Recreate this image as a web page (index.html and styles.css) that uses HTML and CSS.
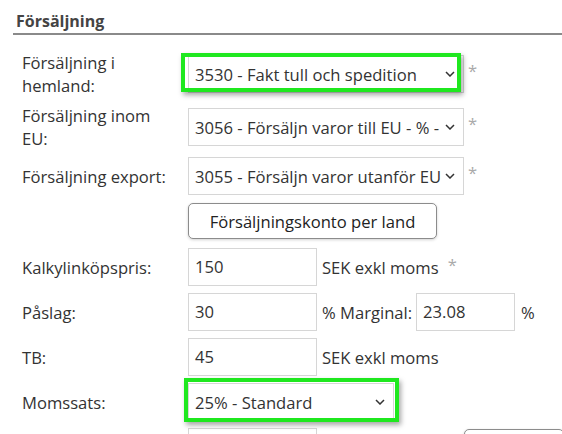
FILE: index.html
```html
<!DOCTYPE html>
<html lang="sv">
<head>
<meta charset="utf-8">
<link rel="stylesheet" href="styles.css">
</head>
<body>
<div class="section">
  <h2 class="heading">Försäljning</h2>
  <div class="form">
    <div class="row row-tall">
      <div class="label">Försäljning i<br>hemland:</div>
      <div class="field">
        <div class="select wide">
          <span class="val">3530 - Fakt tull och spedition</span>
          <svg class="chev" width="10" height="6" viewBox="0 0 10 6"><polyline points="1,1 5,5 9,1" fill="none" stroke="#333" stroke-width="1.5"/></svg>
          <div class="mark mark1"></div>
        </div>
        <span class="req">*</span>
      </div>
    </div>
    <div class="row row-tall">
      <div class="label">Försäljning inom<br>EU:</div>
      <div class="field">
        <div class="select wide">
          <span class="val">3056 - Försäljn varor till EU - % -</span>
          <svg class="chev" width="10" height="6" viewBox="0 0 10 6"><polyline points="1,1 5,5 9,1" fill="none" stroke="#333" stroke-width="1.5"/></svg>
        </div>
        <span class="req">*</span>
      </div>
    </div>
    <div class="row">
      <div class="label">Försäljning export:</div>
      <div class="field">
        <div class="select wide">
          <span class="val">3055 - Försäljn varor utanför EU</span>
          <svg class="chev" width="10" height="6" viewBox="0 0 10 6"><polyline points="1,1 5,5 9,1" fill="none" stroke="#333" stroke-width="1.5"/></svg>
        </div>
        <span class="req">*</span>
      </div>
    </div>
    <div class="row row-btn">
      <div class="label"></div>
      <div class="field">
        <button class="btn">Försäljningskonto per land</button>
      </div>
    </div>
    <div class="row">
      <div class="label">Kalkylinköpspris:</div>
      <div class="field">
        <div class="input">150</div>
        <span class="unit">SEK exkl moms</span>
        <span class="req req-unit">*</span>
      </div>
    </div>
    <div class="row">
      <div class="label">Påslag:</div>
      <div class="field">
        <div class="input">30</div>
        <span class="unit">% Marginal:</span>
        <div class="input small">23.08</div>
        <span class="unit pct">%</span>
      </div>
    </div>
    <div class="row">
      <div class="label">TB:</div>
      <div class="field">
        <div class="input">45</div>
        <span class="unit">SEK exkl moms</span>
      </div>
    </div>
    <div class="row">
      <div class="label">Momssats:</div>
      <div class="field">
        <div class="select narrow">
          <span class="val">25% - Standard</span>
          <svg class="chev" width="10" height="6" viewBox="0 0 10 6"><polyline points="1,1 5,5 9,1" fill="none" stroke="#333" stroke-width="1.5"/></svg>
          <div class="mark mark2"></div>
        </div>
      </div>
    </div>
    <div class="row">
      <div class="label">&nbsp;</div>
      <div class="field">
        <div class="input"></div>
        <div class="spacer"></div>
        <button class="btn btn-cut">&nbsp;</button>
      </div>
    </div>
  </div>
</div>
</body>
</html>
```
FILE: styles.css
```css
html, body {
  margin: 0;
  padding: 0;
  background: #ffffff;
  overflow: hidden;
}
body {
  font-family: "Open Sans", "Noto Sans", sans-serif;
  font-size: 16.6px;
  color: #333333;
}
.section {
  padding-left: 13px;
}
.heading {
  margin: 10px 0 0 0;
  padding: 0 0 1px 3px;
  font-size: 16px;
  line-height: 22px;
  font-weight: 700;
  color: #444444;
  border-bottom: 2px solid #8a8a8a;
}
.form {
  padding: 16px 0 0 9px;
  display: flex;
  flex-direction: column;
  gap: 7px;
}
.row {
  display: flex;
  align-items: center;
  min-height: 38px;
}
.row-tall {
  min-height: 46px;
}
.row-btn {
  min-height: 36px;
  margin-top: 1px;
  margin-bottom: 2px;
}
.label {
  width: 166px;
  flex: none;
  line-height: 23px;
  color: #333333;
}
.field {
  display: flex;
  align-items: center;
}
.select {
  position: relative;
  box-sizing: border-box;
  height: 38px;
  border: 1px solid #d6d6d6;
  background: #fff;
  display: flex;
  align-items: center;
  padding: 0 6px 0 6px;
}
.select.wide { width: 276px; }
.select.narrow { width: 206px; }
.val {
  flex: 1;
  min-width: 0;
  overflow: hidden;
  white-space: nowrap;
  color: #333;
}
.chev {
  flex: none;
  margin-left: 3px;
  margin-right: 2px;
}
.req {
  color: #aaaaaa;
  margin-left: 4px;
  align-self: flex-start;
  margin-top: 4px;
}
.req-unit {
  margin-top: 5px;
  margin-left: 5px;
}
.mark {
  position: absolute;
  box-sizing: border-box;
  border: 4px solid #1fe81f;
  box-shadow: 2px 3px 5px rgba(0, 0, 0, 0.35);
}
.mark1 {
  left: -8px;
  top: -3px;
  width: 280px;
  height: 39px;
}
.mark2 {
  left: -5px;
  top: -6px;
  width: 215px;
  height: 44px;
}
.btn {
  box-sizing: border-box;
  width: 249px;
  height: 36px;
  border: 1px solid #8c8c8c;
  border-radius: 5px;
  background: #fff;
  font-family: "Open Sans", "Noto Sans", sans-serif;
  font-size: 16.6px;
  color: #222;
  box-shadow: 0 1px 3px rgba(0, 0, 0, 0.18);
  padding: 0;
}
.input {
  box-sizing: border-box;
  width: 129px;
  height: 38px;
  border: 1px solid #d6d6d6;
  padding: 0 6px;
  line-height: 36px;
  color: #333;
}
.input.small {
  width: 99px;
}
.unit {
  margin-left: 5px;
  margin-right: 4px;
  white-space: nowrap;
}
.unit.pct {
  margin-left: 6px;
}
.spacer {
  width: 147px;
}
.btn-cut {
  width: 100px;
}
```
